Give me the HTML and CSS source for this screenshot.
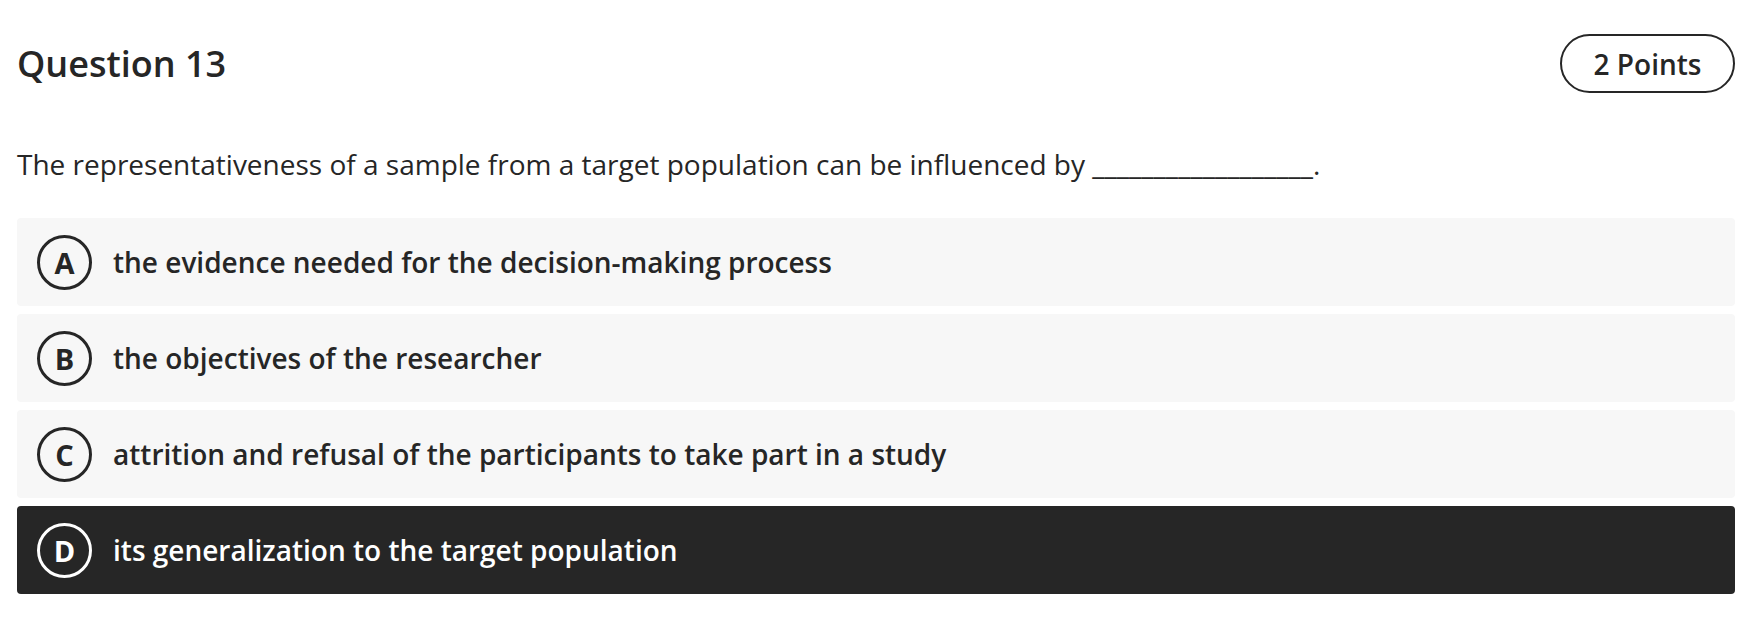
FILE: index.html
```html
<!DOCTYPE html>
<html lang="en">
<head>
<meta charset="utf-8">
<title>Question 13</title>
<link rel="stylesheet" href="styles.css">
</head>
<body>
<main class="question">
  <header class="q-header">
    <h1 class="q-title">Question 13</h1>
    <span class="q-points">2 Points</span>
  </header>
  <p class="q-text">The representativeness of a sample from a target population can be influenced by __________________.</p>
  <ul class="options">
    <li class="option"><span class="letter">A</span><span class="label">the evidence needed for the decision-making process</span></li>
    <li class="option"><span class="letter">B</span><span class="label">the objectives of the researcher</span></li>
    <li class="option"><span class="letter">C</span><span class="label">attrition and refusal of the participants to take part in a study</span></li>
    <li class="option selected"><span class="letter">D</span><span class="label">its generalization to the target population</span></li>
  </ul>
</main>
</body>
</html>
```
FILE: styles.css
```css
html, body {
  margin: 0;
  padding: 0;
  background: #ffffff;
}
body {
  font-family: "Open Sans", "Noto Sans", sans-serif;
  color: #262626;
}
.question {
  padding: 34px 29px 0 17px;
}
.q-header {
  display: flex;
  justify-content: space-between;
  align-items: center;
  height: 59px;
}
.q-title {
  margin: 0;
  font-size: 36px;
  font-weight: 600;
  line-height: 36px;
}
.q-points {
  box-sizing: border-box;
  height: 59px;
  width: 175px;
  border: 2px solid #262626;
  border-radius: 30px;
  display: flex;
  align-items: center;
  justify-content: center;
  font-size: 28px;
  font-weight: 600;
}
.q-text {
  margin: 52px 0 0 0;
  font-size: 28px;
  line-height: 38px;
  font-weight: 400;
}
.options {
  list-style: none;
  margin: 35px 0 0 0;
  padding: 0;
  display: flex;
  flex-direction: column;
  gap: 8px;
}
.option {
  height: 88px;
  box-sizing: border-box;
  background: #f7f7f7;
  border-radius: 4px;
  display: flex;
  align-items: center;
  padding-left: 20px;
  gap: 21px;
}
.letter {
  box-sizing: border-box;
  width: 55px;
  height: 55px;
  border: 3px solid #262626;
  border-radius: 50%;
  display: flex;
  align-items: center;
  justify-content: center;
  font-size: 29px;
  font-weight: 700;
  flex: none;
}
.label {
  font-size: 28px;
  font-weight: 600;
}
.option.selected {
  background: #262626;
  color: #ffffff;
}
.option.selected .letter {
  border-color: #ffffff;
}
```
